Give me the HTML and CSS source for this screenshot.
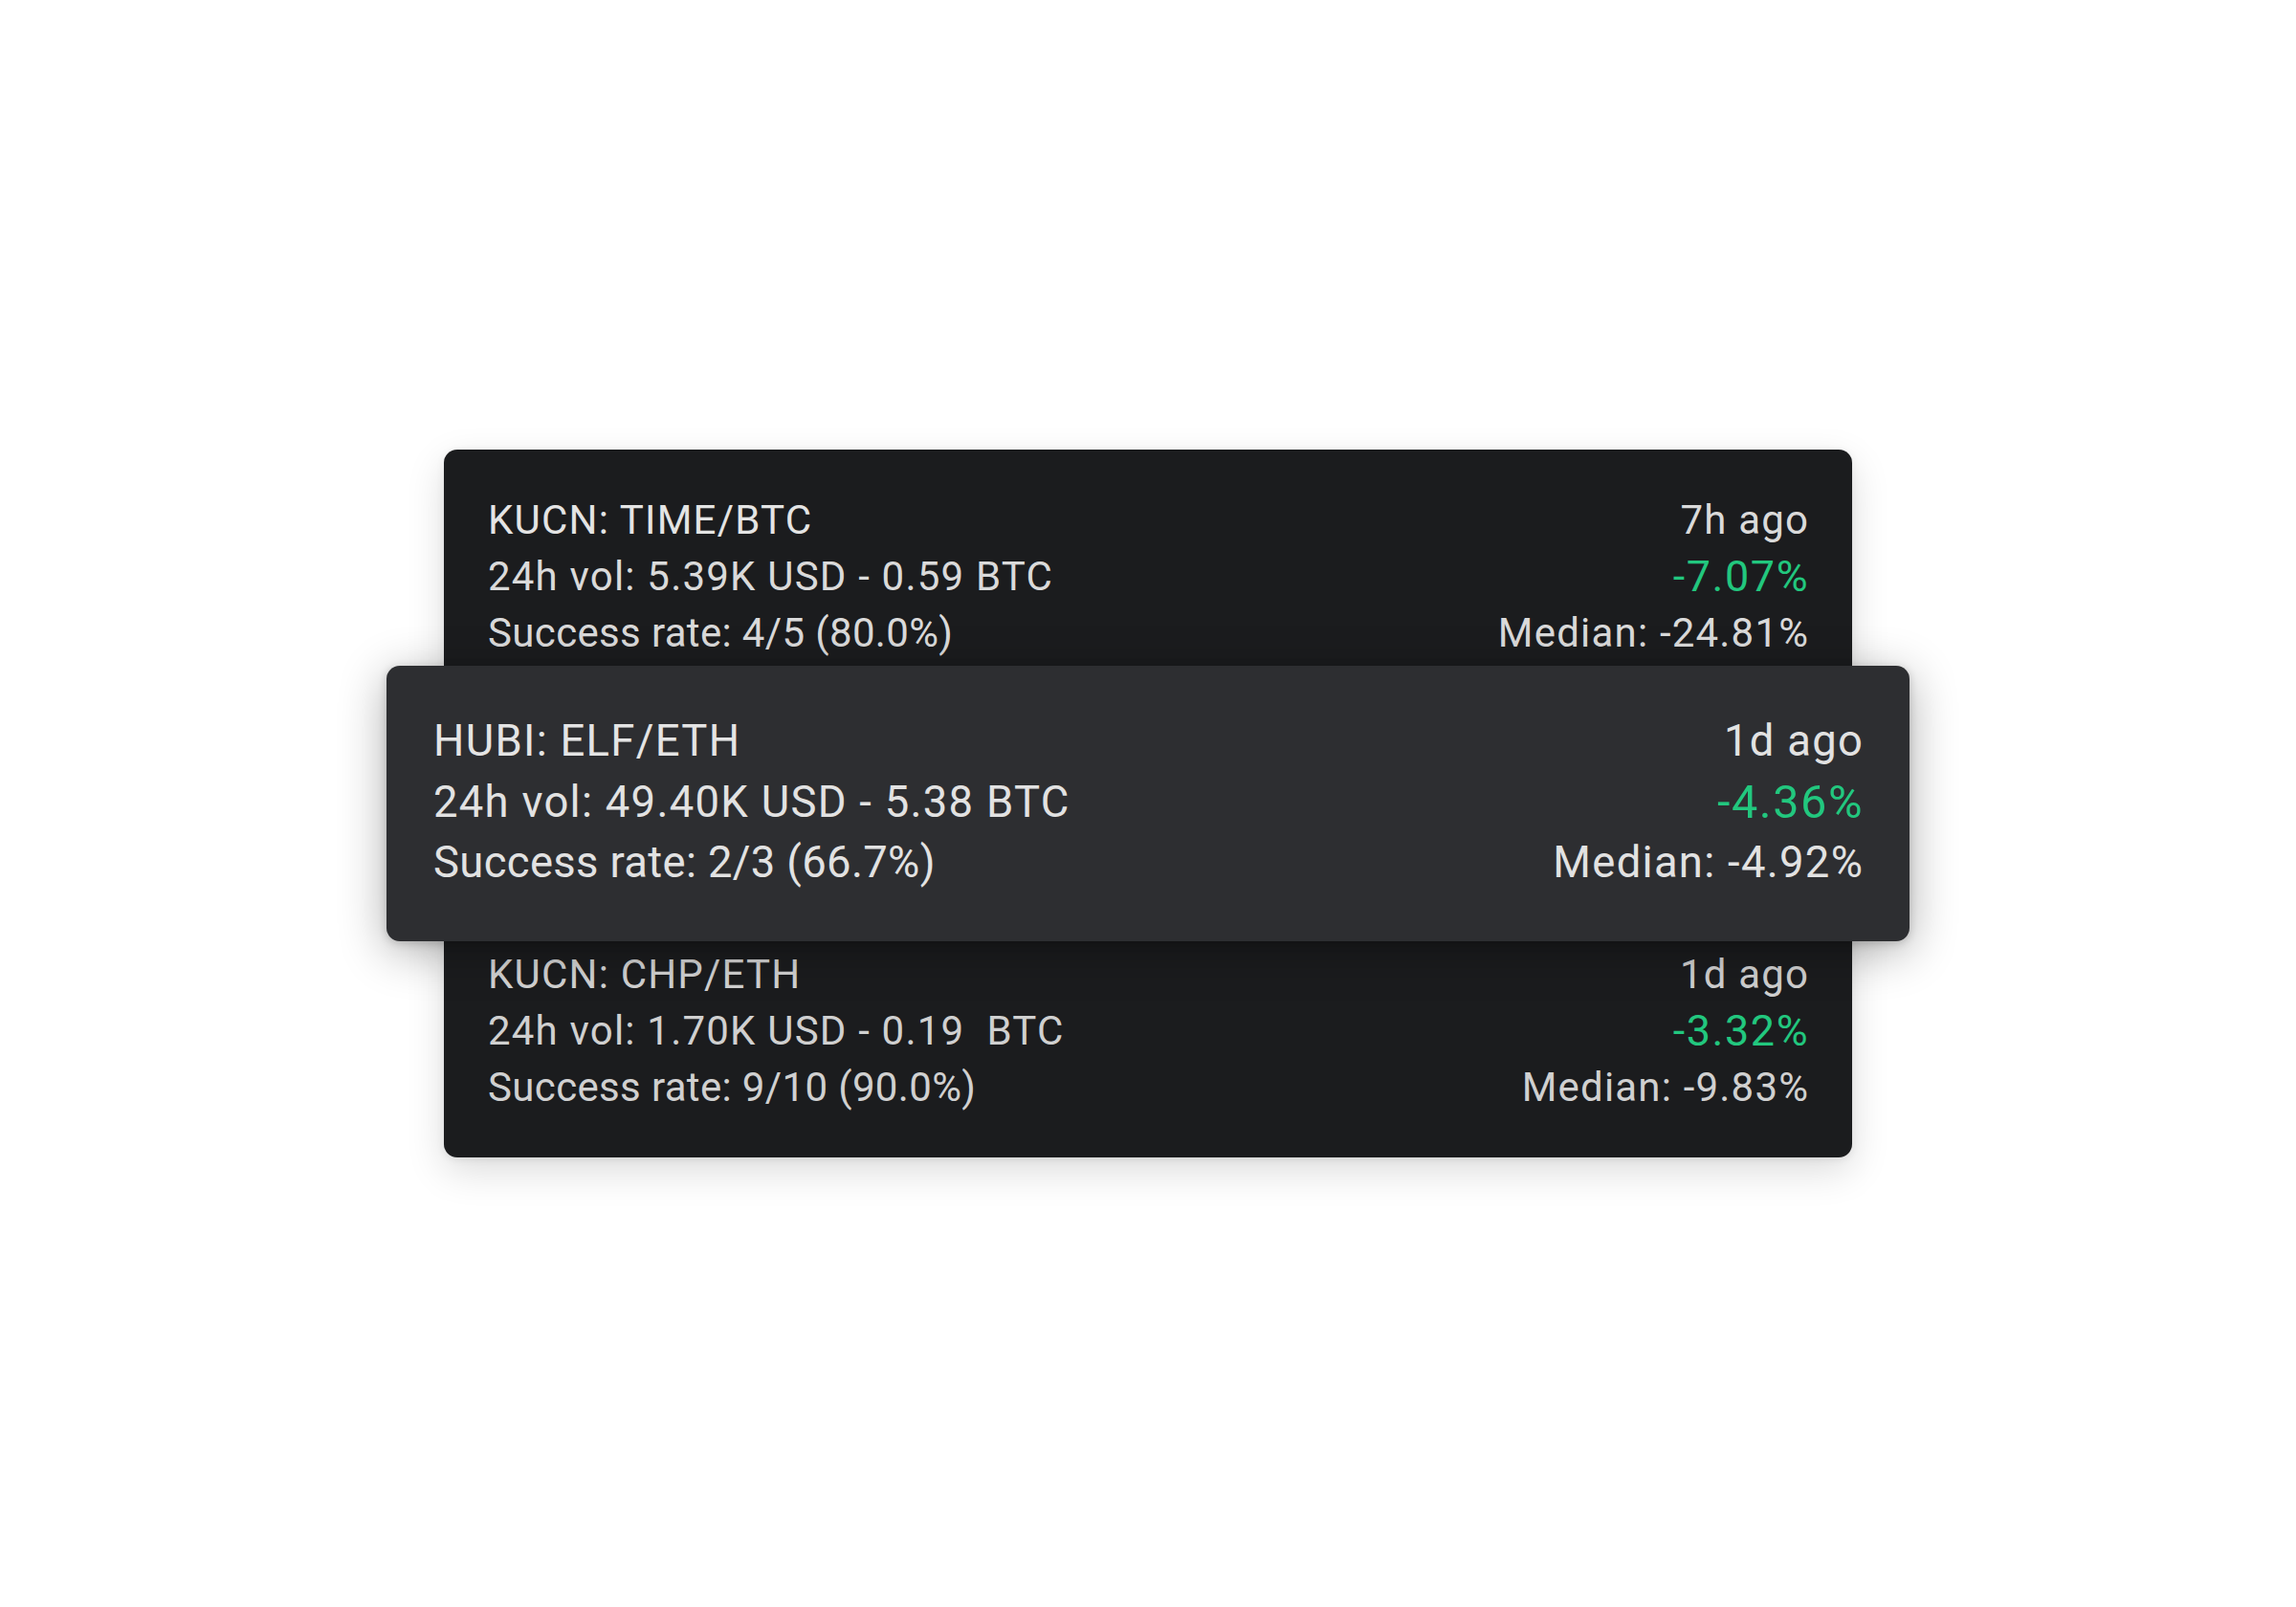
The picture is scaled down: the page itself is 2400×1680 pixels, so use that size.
FILE: index.html
```html
<!DOCTYPE html>
<html lang="en">
<head>
<meta charset="utf-8">
<title>Signals</title>
<link rel="stylesheet" href="styles.css">
</head>
<body>
<main class="stage">
  <section class="card">
    <div class="item">
      <div class="col">
        <div class="line title">KUCN: TIME/BTC</div>
        <div class="line">24h vol: 5.39K USD - 0.59 BTC</div>
        <div class="line rate">Success rate: 4/5 (80.0%)</div>
      </div>
      <div class="col right">
        <div class="line">7h ago</div>
        <div class="line up">-7.07%</div>
        <div class="line">Median: -24.81%</div>
      </div>
    </div>
    <div class="item active">
      <div class="col">
        <div class="line title">HUBI: ELF/ETH</div>
        <div class="line">24h vol: 49.40K USD - 5.38 BTC</div>
        <div class="line rate">Success rate: 2/3 (66.7%)</div>
      </div>
      <div class="col right">
        <div class="line">1d ago</div>
        <div class="line up">-4.36%</div>
        <div class="line">Median: -4.92%</div>
      </div>
    </div>
    <div class="item dim">
      <div class="col">
        <div class="line title">KUCN: CHP/ETH</div>
        <div class="line">24h vol: 1.70K USD - 0.19&nbsp; BTC</div>
        <div class="line rate">Success rate: 9/10 (90.0%)</div>
      </div>
      <div class="col right">
        <div class="line">1d ago</div>
        <div class="line up">-3.32%</div>
        <div class="line">Median: -9.83%</div>
      </div>
    </div>
  </section>
</main>
</body>
</html>
```

FILE: styles.css
```css
* { box-sizing: border-box; }
html, body {
  margin: 0;
  padding: 0;
  background: #ffffff;
}
body {
  width: 2400px;
  height: 1680px;
  font-family: Roboto, "Liberation Sans", sans-serif;
}
.stage {
  padding-top: 470px;
  padding-left: 464px;
}
.card {
  width: 1472px;
  background: #1b1c1e;
  border-radius: 14px;
  padding: 28px 0;
  box-shadow: 0 14px 40px rgba(0, 0, 0, 0.14), 0 2px 8px rgba(0, 0, 0, 0.08);
  display: flex;
  flex-direction: column;
}
.item {
  display: flex;
  justify-content: space-between;
  padding: 16px 46px;
  font-size: 42px;
  line-height: 59px;
  letter-spacing: 1.2px;
  color: #dadada;
}
.item.dim { color: #d0d0d0; }
.item.active {
  position: relative;
  z-index: 1;
  margin: -11px -60px;
  padding: 47px 49px 50px;
  font-size: 45.4px;
  line-height: 63.5px;
  letter-spacing: 1.3px;
  background: #2d2e31;
  color: #e2e2e2;
  border-radius: 14px;
  box-shadow: 0 10px 50px rgba(0, 0, 0, 0.32), 0 2px 10px rgba(0, 0, 0, 0.18);
}
.col {
  display: flex;
  flex-direction: column;
}
.col.right {
  align-items: flex-end;
  margin-right: -1.2px;
}
.line { white-space: nowrap; }
.rate { letter-spacing: 0.35px; }
.title { color: #e4e4e4; }
.item.dim .title { color: #d2d2d2; }
.up {
  color: #22c77e;
  font-size: 1.07em;
  letter-spacing: 1.6px;
}
```
